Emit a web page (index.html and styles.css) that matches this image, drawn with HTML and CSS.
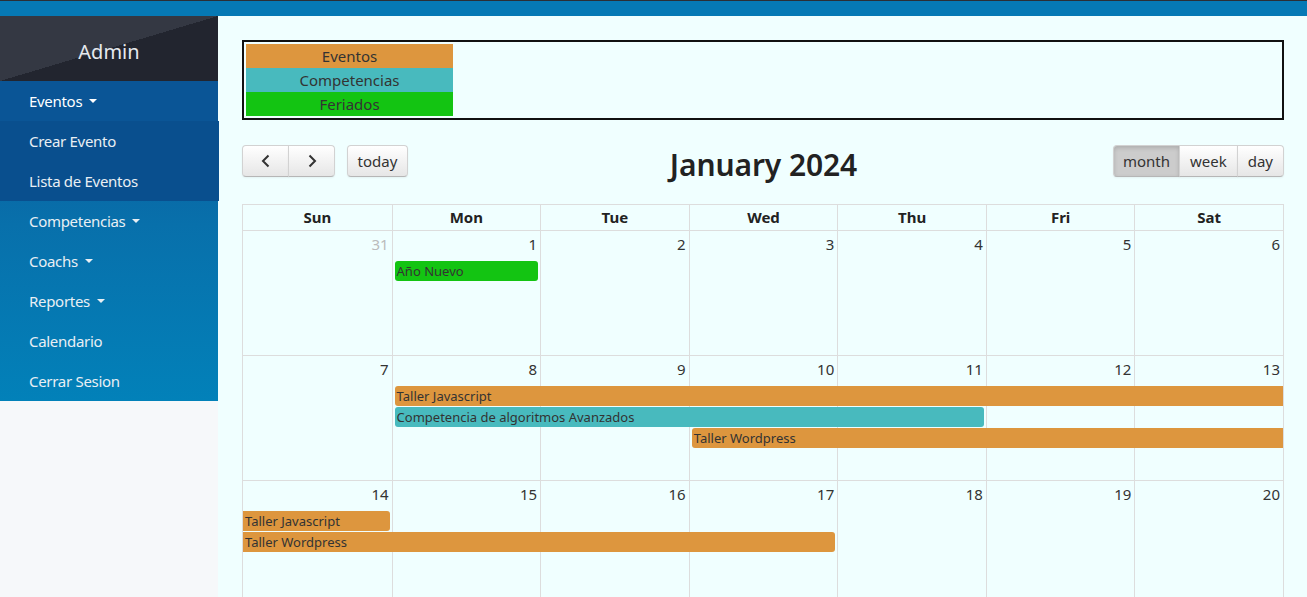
FILE: index.html
```html
<!DOCTYPE html>
<html lang="es">
<head>
<meta charset="utf-8">
<title>Calendario</title>
<link rel="stylesheet" href="styles.css">
</head>
<body>
<div class="topbar"></div>
<div class="layout">
  <aside class="sidebar">
    <div class="brand">Admin</div>
    <nav class="menu">
      <a class="item open">Eventos <span class="caret"></span></a>
      <div class="submenu">
        <a class="item">Crear Evento</a>
        <a class="item">Lista de Eventos</a>
      </div>
      <a class="item">Competencias <span class="caret"></span></a>
      <a class="item">Coachs <span class="caret"></span></a>
      <a class="item">Reportes <span class="caret"></span></a>
      <a class="item">Calendario</a>
      <a class="item">Cerrar Sesion</a>
    </nav>
  </aside>
  <main class="main">
    <div class="legend">
      <div class="legend-item c-evento">Eventos</div>
      <div class="legend-item c-comp">Competencias</div>
      <div class="legend-item c-feriado">Feriados</div>
    </div>

    <div class="toolbar">
      <div class="tb-left">
        <div class="btn-group">
          <button class="btn icon-btn"><svg width="12" height="14" viewBox="0 0 12 14"><path d="M8.5 1.5 3 7l5.5 5.5" fill="none" stroke="#333" stroke-width="2"/></svg></button>
          <button class="btn icon-btn"><svg width="12" height="14" viewBox="0 0 12 14"><path d="M3.5 1.5 9 7l-5.5 5.5" fill="none" stroke="#333" stroke-width="2"/></svg></button>
        </div>
        <button class="btn single">today</button>
      </div>
      <h2 class="title">January 2024</h2>
      <div class="btn-group">
        <button class="btn active">month</button>
        <button class="btn">week</button>
        <button class="btn">day</button>
      </div>
    </div>

    <div class="calendar">
      <div class="head">
        <div>Sun</div><div>Mon</div><div>Tue</div><div>Wed</div><div>Thu</div><div>Fri</div><div>Sat</div>
      </div>

      <div class="week">
        <div class="bg"><div></div><div></div><div></div><div></div><div></div><div></div><div></div></div>
        <div class="content">
          <div class="num other">31</div><div class="num">1</div><div class="num">2</div><div class="num">3</div><div class="num">4</div><div class="num">5</div><div class="num">6</div>
          <div class="ev c-feriado" style="grid-column: 2 / 3; grid-row: 2;">Año Nuevo</div>
        </div>
      </div>

      <div class="week">
        <div class="bg"><div></div><div></div><div></div><div></div><div></div><div></div><div></div></div>
        <div class="content">
          <div class="num">7</div><div class="num">8</div><div class="num">9</div><div class="num">10</div><div class="num">11</div><div class="num">12</div><div class="num">13</div>
          <div class="ev c-evento cont-r" style="grid-column: 2 / 8; grid-row: 2;">Taller Javascript</div>
          <div class="ev c-comp" style="grid-column: 2 / 6; grid-row: 3;">Competencia de algoritmos Avanzados</div>
          <div class="ev c-evento cont-r" style="grid-column: 4 / 8; grid-row: 4;">Taller Wordpress</div>
        </div>
      </div>

      <div class="week">
        <div class="bg"><div></div><div></div><div></div><div></div><div></div><div></div><div></div></div>
        <div class="content">
          <div class="num">14</div><div class="num">15</div><div class="num">16</div><div class="num">17</div><div class="num">18</div><div class="num">19</div><div class="num">20</div>
          <div class="ev c-evento cont-l" style="grid-column: 1 / 2; grid-row: 2;">Taller Javascript</div>
          <div class="ev c-evento cont-l" style="grid-column: 1 / 5; grid-row: 3;">Taller Wordpress</div>
        </div>
      </div>
    </div>
  </main>
</div>
</body>
</html>
```

FILE: styles.css
```css
* { box-sizing: border-box; }
html, body { margin: 0; padding: 0; height: 100%; overflow: hidden; }
body {
  font-family: "Noto Sans", "Open Sans", sans-serif;
  background: #f0ffff;
  color: #333;
}
.topbar {
  height: 16px;
  background: #0679b5;
  border-top: 1px solid #2b2f36;
}
.layout {
  display: flex;
  height: calc(100% - 16px);
}
.sidebar {
  width: 218px;
  flex: none;
  background: #f6f8fa;
}
.brand {
  height: 65px;
  display: flex;
  align-items: center;
  justify-content: center;
  padding-top: 6px;
  color: #e6e9ee;
  font-size: 20px;
  background: linear-gradient(to bottom right, #343843 50%, #22252f 50%);
}
.menu {
  background: linear-gradient(to bottom, #0b5a9b 0%, #0870ab 45%, #0281b9 100%);
}
.item {
  display: flex;
  align-items: center;
  height: 40px;
  padding-left: 29px;
  color: #e9eff4;
  font-size: 15px;
  letter-spacing: -0.3px;
  text-decoration: none;
}
.item.open { background: #0a5596; color: #fff; }
.submenu { background: #094f8e; margin-right: -1px; }
.caret {
  display: inline-block;
  margin-left: 7px;
  width: 0; height: 0;
  border-left: 4px solid transparent;
  border-right: 4px solid transparent;
  border-top: 4px solid currentColor;
}

.main {
  flex: 1;
  padding: 24px 23px 0 24px;
  min-width: 0;
}
.legend {
  border: 2px solid #111;
  padding: 2px;
  height: 80px;
}
.legend-item {
  width: 207px;
  height: 24px;
  line-height: 24px;
  text-align: center;
  font-size: 15px;
  color: #333;
}
.c-evento { background: #dd963e; }
.c-comp { background: #48babe; }
.c-feriado { background: #13c412; }

.toolbar {
  margin-top: 25px;
  display: flex;
  align-items: center;
  justify-content: space-between;
  height: 32px;
}
.tb-left { display: flex; gap: 12px; }
.btn-group { display: flex; }
.btn {
  height: 32px;
  padding: 0 10px;
  font-family: inherit;
  font-size: 15px;
  color: #333;
  background: linear-gradient(to bottom, #ffffff, #e6e6e6);
  border: 1px solid #d2d2d2;
  border-bottom-color: #b6b6b6;
  box-shadow: inset 0 1px 0 rgba(255,255,255,.2), 0 1px 2px rgba(0,0,0,.05);
  margin: 0;
  cursor: pointer;
}
.btn-group .btn { border-radius: 0; }
.btn-group .btn + .btn { margin-left: -1px; }
.btn-group .btn:first-child { border-radius: 4px 0 0 4px; }
.btn-group .btn:last-child { border-radius: 0 4px 4px 0; }
.btn.active { padding: 0 9px; }
.btn.single { border-radius: 4px; width: 61px; padding: 0; }
.icon-btn { width: 47px; display: flex; align-items: center; justify-content: center; }
.btn.active {
  background: #cccccc;
  box-shadow: inset 0 2px 4px rgba(0,0,0,.15), 0 1px 2px rgba(0,0,0,.05);
}
.title {
  margin: 6px 0 0 6px;
  font-size: 30px;
  font-weight: 600;
  color: #222;
  letter-spacing: -0.1px;
}

.calendar {
  margin-top: 27px;
  border-left: 1px solid #ddd;
  border-right: 1px solid #ddd;
}
.head {
  display: grid;
  grid-template-columns: repeat(7, 1fr);
  border-top: 1px solid #ddd;
  border-bottom: 1px solid #ddd;
}
.head > div {
  height: 25px;
  line-height: 25px;
  text-align: center;
  font-weight: 700;
  font-size: 15px;
  color: #222;
}
.head > div + div { border-left: 1px solid #ddd; }
.week {
  position: relative;
  height: 125px;
  border-bottom: 1px solid #ddd;
}
.bg {
  position: absolute;
  inset: 0;
  display: grid;
  grid-template-columns: repeat(7, 1fr);
}
.bg > div + div { border-left: 1px solid #ddd; }
.content {
  position: relative;
  display: grid;
  grid-template-columns: repeat(7, 1fr);
  grid-template-rows: 29px;
  grid-auto-rows: 20px;
  row-gap: 1px;
}
.num {
  grid-row: 1;
  text-align: right;
  padding: 3px 3px 0 0;
  font-size: 15px;
  color: #333;
}
.num.other { color: #bbb; }
.ev {
  margin: 0 2px 0 3px;
  height: 20px;
  line-height: 20px;
  font-size: 13px;
  color: #333;
  padding-left: 2px;
  border-radius: 3px;
  white-space: nowrap;
  overflow: hidden;
}
.ev.cont-r { margin-right: 0; border-radius: 3px 0 0 3px; }
.ev.cont-l { margin-left: 0; border-radius: 0 3px 3px 0; }
```
